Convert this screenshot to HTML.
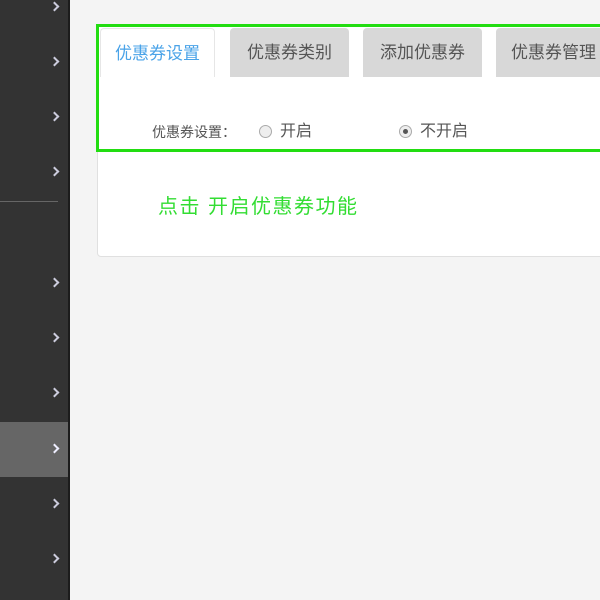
<!DOCTYPE html>
<html><head><meta charset="utf-8"><style>
*{margin:0;padding:0;box-sizing:border-box}
body{width:600px;height:600px;overflow:hidden;background:#f4f4f4;position:relative;font-family:"Liberation Sans","Noto Sans CJK SC",sans-serif}
.side{position:absolute;left:0;top:0;width:70px;height:600px;background:#333;border-right:2px solid #1c1c1c}
.chev{position:absolute;left:51px;width:7px;height:7px;border-right:2px solid #ccd;border-top:2px solid #ccd;transform:rotate(45deg)}
.act{position:absolute;left:0;top:422px;width:68px;height:55px;background:#666}
.div{position:absolute;left:0;top:201px;width:58px;height:1px;background:#666}
.card{position:absolute;left:97px;top:25px;width:520px;height:232px;background:#fff;border:1px solid #e0e0e0;border-radius:4px}
.green{position:absolute;left:96px;top:24px;width:520px;height:128px;border:3px solid #22dd11}
.tab{position:absolute;top:28px;height:49px;font-size:17px;line-height:50px;text-align:center;color:#555;background:#d8d8d8;border-radius:4px 4px 0 0;white-space:nowrap;overflow:hidden}
.t1{left:100px;width:115px;background:#fff;color:#4aa3e8;border:1px solid #e6e6e6;border-bottom:none}
.lbl{position:absolute;top:123px;font-size:14px;color:#555;line-height:18px}
.radio{position:absolute;top:125px;width:13px;height:13px;border-radius:50%;border:1px solid #aaa;background:#eee}
.radio.on::after{content:"";position:absolute;left:3px;top:3px;width:5px;height:5px;border-radius:50%;background:#555}
.note{position:absolute;left:158px;top:190px;font-size:20px;letter-spacing:1.5px;color:#33dd33;white-space:nowrap}
</style></head><body>
<div class="side">
<div class="act"></div>
<div class="div"></div>
<div class="chev" style="top:3px"></div>
<div class="chev" style="top:58px"></div>
<div class="chev" style="top:113px"></div>
<div class="chev" style="top:168px"></div>
<div class="chev" style="top:279px"></div>
<div class="chev" style="top:334px"></div>
<div class="chev" style="top:389px"></div>
<div class="chev" style="top:445px;border-color:#eef"></div>
<div class="chev" style="top:500px"></div>
<div class="chev" style="top:555px"></div>
</div>
<div class="card"></div>
<div class="tab t1">优惠券设置</div>
<div class="tab" style="left:230px;width:119px">优惠券类别</div>
<div class="tab" style="left:363px;width:119px">添加优惠券</div>
<div class="tab" style="left:496px;width:119px;text-align:left;padding-left:15px">优惠券管理</div>
<div class="lbl" style="left:152px">优惠券设置：</div>
<div class="radio" style="left:259px"></div>
<div class="lbl" style="left:280px;font-size:16px;top:123px">开启</div>
<div class="radio on" style="left:399px"></div>
<div class="lbl" style="left:420px;font-size:16px;top:123px">不开启</div>
<div class="green"></div>
<div class="note">点击 开启优惠券功能</div>
</body></html>
